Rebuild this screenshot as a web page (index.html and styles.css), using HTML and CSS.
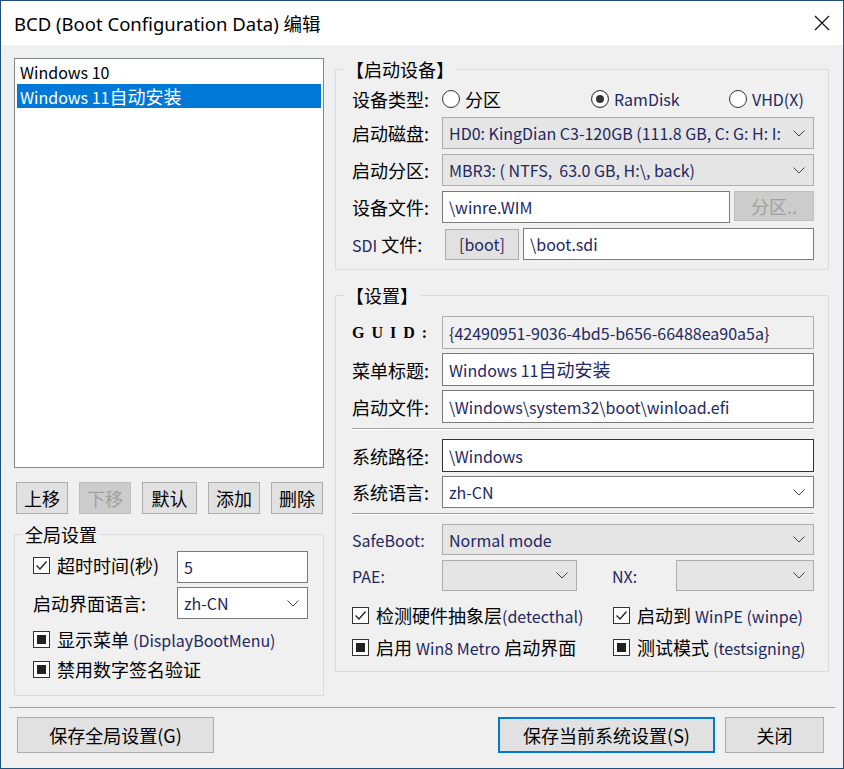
FILE: index.html
```html
<!DOCTYPE html>
<html lang="zh-CN">
<head>
  <meta charset="UTF-8">
  <title>BCD (Boot Configuration Data) 编辑</title>
  <link rel="stylesheet" href="styles.css">
</head>
<body>

  <div class="window">

    <!-- タイトルバー -->
    <div class="titlebar">
      <span class="title">BCD (Boot Configuration Data) 编辑</span>
      <span class="close">
        <svg width="16" height="16" viewBox="0 0 16 16"><path d="M1 1L15 15M15 1L1 15" stroke="#111" stroke-width="1.2" fill="none"/></svg>
      </span>
    </div>

    <div class="client">
      <div class="columns">

        <!-- 左：エントリ一覧＋全局设置 -->
        <div class="left">
          <div class="listbox">
            <div class="list-item">Windows 10</div>
            <div class="list-item selected">Windows 11<span class="zh">自动安装</span></div>
          </div>

          <div class="move-buttons">
            <div class="btn">上移</div>
            <div class="btn disabled">下移</div>
            <div class="btn">默认</div>
            <div class="btn">添加</div>
            <div class="btn">删除</div>
          </div>

          <fieldset class="group global">
            <legend>全局设置</legend>
            <div class="global-grid">
              <label class="check checked"><span>超时时间(秒)</span></label>
              <div class="edit"><span class="val">5</span></div>
              <span class="label">启动界面语言:</span>
              <div class="combo white"><span class="val">zh-CN</span><svg class="arrow" width="12" height="7" viewBox="0 0 12 7"><path d="M0.5 0.5L6 6L11.5 0.5" stroke="#444" fill="none"/></svg></div>
            </div>
            <label class="check mixed"><span>显示菜单 <span class="latin">(DisplayBootMenu)</span></span></label>
            <label class="check mixed"><span>禁用数字签名验证</span></label>
          </fieldset>
        </div>

        <!-- 右：启动设备＋设置 -->
        <div class="right">
          <fieldset class="group device">
            <legend>【启动设备】</legend>
            <div class="row radio-row">
              <span class="label">设备类型:</span>
              <div class="radios">
                <label class="radio"><span>分区</span></label>
                <label class="radio on"><span class="latin">RamDisk</span></label>
                <label class="radio"><span class="latin">VHD(X)</span></label>
              </div>
            </div>
            <div class="row">
              <span class="label">启动磁盘:</span>
              <div class="combo"><span class="val clip">HD0: KingDian C3-120GB (111.8 GB, C: G: H: I:</span><svg class="arrow" width="12" height="7" viewBox="0 0 12 7"><path d="M0.5 0.5L6 6L11.5 0.5" stroke="#444" fill="none"/></svg></div>
            </div>
            <div class="row">
              <span class="label">启动分区:</span>
              <div class="combo"><span class="val">MBR3: ( NTFS,&nbsp; 63.0 GB, H:\, back)</span><svg class="arrow" width="12" height="7" viewBox="0 0 12 7"><path d="M0.5 0.5L6 6L11.5 0.5" stroke="#444" fill="none"/></svg></div>
            </div>
            <div class="row">
              <span class="label">设备文件:</span>
              <div class="edit grow"><span class="val">\winre.WIM</span></div>
              <div class="btn disabled part">分区..</div>
            </div>
            <div class="row">
              <span class="label"><span class="latin">SDI</span> 文件:</span>
              <div class="btn boot"><span class="latin">[boot]</span></div>
              <div class="edit grow"><span class="val">\boot.sdi</span></div>
            </div>
          </fieldset>

          <fieldset class="group settings">
            <legend>【设置】</legend>
            <div class="row tall">
              <span class="label guid">GUID:</span>
              <div class="edit readonly"><span class="val">{42490951-9036-4bd5-b656-66488ea90a5a}</span></div>
            </div>
            <div class="row tall">
              <span class="label">菜单标题:</span>
              <div class="edit"><span class="val">Windows 11<span class="zh">自动安装</span></span></div>
            </div>
            <div class="row tall">
              <span class="label">启动文件:</span>
              <div class="edit"><span class="val">\Windows\system32\boot\winload.efi</span></div>
            </div>
            <div class="sep"></div>
            <div class="row tall">
              <span class="label">系统路径:</span>
              <div class="edit focus"><span class="val">\Windows</span></div>
            </div>
            <div class="row">
              <span class="label">系统语言:</span>
              <div class="combo white"><span class="val">zh-CN</span><svg class="arrow" width="12" height="7" viewBox="0 0 12 7"><path d="M0.5 0.5L6 6L11.5 0.5" stroke="#444" fill="none"/></svg></div>
            </div>
            <div class="sep"></div>
            <div class="row short">
              <span class="label latin">SafeBoot:</span>
              <div class="combo"><span class="val">Normal mode</span><svg class="arrow" width="12" height="7" viewBox="0 0 12 7"><path d="M0.5 0.5L6 6L11.5 0.5" stroke="#444" fill="none"/></svg></div>
            </div>
            <div class="row short pae-row">
              <span class="label latin">PAE:</span>
              <div class="combo pae"><span class="val"></span><svg class="arrow" width="12" height="7" viewBox="0 0 12 7"><path d="M0.5 0.5L6 6L11.5 0.5" stroke="#444" fill="none"/></svg></div>
              <span class="label latin nx">NX:</span>
              <div class="combo grow"><span class="val"></span><svg class="arrow" width="12" height="7" viewBox="0 0 12 7"><path d="M0.5 0.5L6 6L11.5 0.5" stroke="#444" fill="none"/></svg></div>
            </div>
            <div class="checks">
              <label class="check checked"><span>检测硬件抽象层<span class="latin">(detecthal)</span></span></label>
              <label class="check checked"><span>启动到 <span class="latin">WinPE (winpe)</span></span></label>
              <label class="check mixed"><span>启用 <span class="latin">Win8 Metro</span> 启动界面</span></label>
              <label class="check mixed"><span>测试模式 <span class="latin">(testsigning)</span></span></label>
            </div>
          </fieldset>
        </div>
      </div>

      <!-- 下部ボタン -->
      <div class="footer">
        <div class="btn wide">保存全局设置(G)</div>
        <div class="spacer"></div>
        <div class="btn wide default">保存当前系统设置(S)</div>
        <div class="btn closebtn">关闭</div>
      </div>
    </div>
  </div>

</body>
</html>
```

FILE: styles.css
```css
/* ウィンドウ全体 */
body {
  margin: 0;
  background: #ffffff;
  font-family: "Noto Sans CJK SC", "Noto Sans", sans-serif;
  font-size: 18px;
  color: #000;
}

.window {
  width: 844px;
  height: 769px;
  box-sizing: border-box;
  border: 1px solid #1f4e79;
  background: #f0f0f0;
  display: flex;
  flex-direction: column;
}

/* タイトルバー */
.titlebar {
  height: 44px;
  background: #fff;
  display: flex;
  align-items: center;
  justify-content: space-between;
  padding: 0 13px;
}

.title {
  font-family: "Noto Sans", "Noto Sans CJK SC", sans-serif;
  font-size: 18.5px;
  line-height: 24px;
  padding-top: 1px;
}

.close {
  display: flex;
  width: 16px;
  height: 16px;
}

.client {
  flex: 1;
  padding: 13px 14px 0 13px;
  display: flex;
  flex-direction: column;
}

.columns {
  display: grid;
  grid-template-columns: 310px 494px;
  column-gap: 11px;
}

/* 英数字は少し小さく */
.latin {
  font-size: 16px;
  color: #1e2862;
}

.zh {
  font-size: 18px;
}

/* 共通コントロール */
.edit,
.combo {
  box-sizing: border-box;
  height: 32px;
  border: 1px solid #7a7a7a;
  background: #fff;
  padding: 0 6px;
  display: flex;
  align-items: center;
  white-space: nowrap;
  overflow: hidden;
  color: #1e2862;
  font-size: 16px;
  line-height: 26px;
}

.val {
  flex: 1;
  min-width: 0;
  white-space: nowrap;
}

.val.clip {
  overflow: hidden;
}

.combo {
  border-color: #adadad;
  background: #e5e5e5;
  padding-right: 8px;
}

.combo.white {
  background: #fff;
  border-color: #7a7a7a;
}

.combo .arrow {
  flex: none;
  margin-left: 8px;
}

.edit.readonly {
  background: #f0f0f0;
  border-color: #adadad;
}

.edit.focus {
  border-color: #333;
  height: 33px;
}

.btn {
  box-sizing: border-box;
  height: 32px;
  border: 1px solid #adadad;
  background: #e1e1e1;
  display: flex;
  align-items: center;
  justify-content: center;
  line-height: 20px;
}

.btn.disabled {
  background: #cccccc;
  border-color: #bfbfbf;
  color: #a0a0a0;
}

/* チェックボックス・ラジオ */
.check {
  display: flex;
  align-items: center;
  height: 28px;
  white-space: nowrap;
}

.check::before {
  content: "";
  box-sizing: border-box;
  width: 17px;
  height: 17px;
  margin-right: 7px;
  border: 1px solid #333;
  background: #fff center/13px no-repeat;
  flex: none;
}

.check.checked::before {
  background-image: url("data:image/svg+xml,%3Csvg xmlns='http://www.w3.org/2000/svg' viewBox='0 0 13 13'%3E%3Cpath d='M1.5 6.5L5 10L11.5 2.5' stroke='%23222' stroke-width='1.3' fill='none'/%3E%3C/svg%3E");
}

.check.mixed::before {
  box-shadow: inset 0 0 0 3px #fff, inset 0 0 0 12px #222;
}

.radio {
  display: flex;
  align-items: center;
  white-space: nowrap;
}

.radio::before {
  content: "";
  box-sizing: border-box;
  width: 18px;
  height: 18px;
  border-radius: 50%;
  border: 1px solid #333;
  background: #fff;
  margin-right: 5px;
  flex: none;
}

.radio.on::before {
  box-shadow: inset 0 0 0 4px #fff, inset 0 0 0 9px #333;
}

/* 左カラム */
.listbox {
  box-sizing: border-box;
  height: 410px;
  border: 1px solid #828790;
  background: #fff;
  padding: 1px 2px;
}

.list-item {
  height: 24px;
  line-height: 24px;
  padding-left: 3px;
  white-space: nowrap;
  font-size: 16px;
}

.list-item.selected {
  background: #0078d7;
  color: #fff;
}

.move-buttons {
  display: flex;
  justify-content: space-between;
  padding: 0 1px 0 2px;
  margin-top: 14px;
}

.move-buttons .btn {
  width: 52px;
}

.move-buttons .btn:nth-child(3) {
  width: 55px;
}

/* グループボックス */
.group {
  margin: 0;
  min-width: 0;
  border: 1px solid #dcdcdc;
  padding: 6px 14px 9px 16px;
}

.group legend {
  font-size: 18px;
  line-height: 22px;
  padding: 0 2px;
  margin-left: -8px;
}

.global {
  margin-top: 9px;
  padding: 6px 15px 9px 18px;
}

.global legend {
  margin-left: -10px;
}

.global-grid {
  display: grid;
  grid-template-columns: 144px 131px;
  row-gap: 4px;
  margin-bottom: 7px;
  align-items: center;
}

.global .check {
  height: 26px;
  margin-bottom: 4px;
}

/* 右カラム */
.row {
  display: flex;
  align-items: center;
  margin-bottom: 5px;
}

.row .label {
  width: 90px;
  flex: none;
  white-space: nowrap;
}

.row .edit,
.row .combo {
  flex: 1;
}

.radio-row {
  height: 26px;
}

.radios {
  display: grid;
  grid-template-columns: 149px 138px auto;
}

.btn.part {
  width: 80px;
  height: 30px;
  margin-left: 4px;
  align-self: flex-start;
}

.btn.boot {
  width: 74px;
  height: 31px;
  margin-left: 3px;
  margin-right: 4px;
}

.device .row:last-child {
  margin-bottom: 0;
}

.settings {
  margin-top: 14px;
  padding: 10px 14px 10px 16px;
}

.row.tall .edit {
  height: 33px;
}

.row.tall {
  margin-bottom: 4px;
}

.label.guid {
  font-family: "Liberation Serif", serif;
  font-weight: bold;
  font-size: 16px;
  letter-spacing: 7px;
}

.sep {
  height: 0;
  border-top: 1px solid #a0a0a0;
  border-bottom: 1px solid #fff;
  margin: 5px 0 9px;
}

.row.short .combo {
  height: 31px;
}

.pae-row {
  margin-top: 5px;
}

.combo.pae {
  flex: none;
  width: 135px;
}

.label.nx {
  width: 64px;
  margin-left: 35px;
}

.checks {
  display: grid;
  grid-template-columns: 261px auto;
  row-gap: 4px;
  margin-top: 10px;
}

/* 下部ボタン */
.footer {
  margin: 11px -6px 0 -5px;
  padding: 9px 11px 0 8px;
  border-top: 1px solid #a0a0a0;
  display: flex;
}

.footer .btn {
  height: 36px;
}

.btn.wide:first-child {
  width: 197px;
}

.spacer {
  flex: 1;
}

.btn.default {
  width: 217px;
  border: 2px solid #0078d7;
  margin-right: 10px;
}

.btn.closebtn {
  width: 99px;
}
```
